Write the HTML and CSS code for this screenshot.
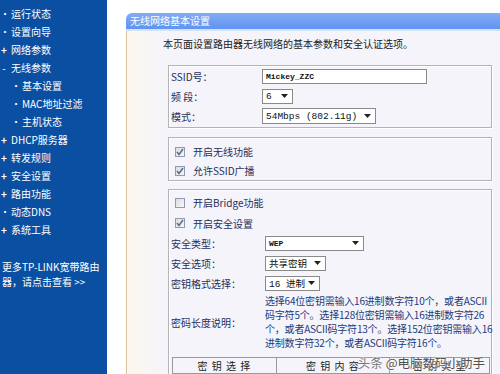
FILE: index.html
```html
<!DOCTYPE html>
<html lang="zh-CN">
<head>
  <meta charset="UTF-8" />
  <meta name="viewport" content="width=device-width, initial-scale=1.0"/>
  <title>无线网络基本设置</title>
  <link rel="stylesheet" href="styles.css">
</head>
<body>
<div class="page">

  <!-- 左侧菜单 -->
  <nav class="menu">
    <ul>
      <li><span class="mark">•</span>运行状态</li>
      <li><span class="mark">•</span>设置向导</li>
      <li><span class="mark plus">+</span>网络参数</li>
      <li><span class="mark">-</span>无线参数</li>
      <li class="sub"><span class="mark">•</span>基本设置</li>
      <li class="sub"><span class="mark">•</span>MAC地址过滤</li>
      <li class="sub"><span class="mark">•</span>主机状态</li>
      <li><span class="mark plus">+</span>DHCP服务器</li>
      <li><span class="mark plus">+</span>转发规则</li>
      <li><span class="mark plus">+</span>安全设置</li>
      <li><span class="mark plus">+</span>路由功能</li>
      <li><span class="mark">•</span>动态DNS</li>
      <li><span class="mark plus">+</span>系统工具</li>
    </ul>
    <p class="more">更多TP-LINK宽带路由<br>器，请点击查看 &gt;&gt;</p>
  </nav>

  <!-- 内容区 -->
  <main class="main">
    <section class="panel">
      <h2 class="panel-title">无线网络基本设置</h2>
      <div class="panel-body">
        <p class="intro">本页面设置路由器无线网络的基本参数和安全认证选项。</p>

        <div class="group basic">
          <div class="row">
            <span class="label">SSID号：</span>
            <input class="text" type="text" value="Mickey_ZZC">
          </div>
          <div class="row">
            <span class="label">频 段：</span>
            <span class="select w-channel">6<svg class="arrow" width="7" height="4" viewBox="0 0 7 4"><path d="M0 0h7L3.5 4z"/></svg></span>
          </div>
          <div class="row">
            <span class="label">模式：</span>
            <span class="select w-mode">54Mbps (802.11g)<svg class="arrow" width="7" height="4" viewBox="0 0 7 4"><path d="M0 0h7L3.5 4z"/></svg></span>
          </div>
        </div>

        <div class="group switches">
          <div class="check-row">
            <span class="box on"><svg width="8" height="8" viewBox="0 0 8 8"><path d="M1 4l2 2.5L7 1"/></svg></span>开启无线功能
          </div>
          <div class="check-row">
            <span class="box on"><svg width="8" height="8" viewBox="0 0 8 8"><path d="M1 4l2 2.5L7 1"/></svg></span>允许SSID广播
          </div>
        </div>

        <div class="group security">
          <div class="check-row first">
            <span class="box"></span>开启Bridge功能
          </div>
          <div class="check-row">
            <span class="box on"><svg width="8" height="8" viewBox="0 0 8 8"><path d="M1 4l2 2.5L7 1"/></svg></span>开启安全设置
          </div>
          <div class="row">
            <span class="label">安全类型：</span>
            <span class="select w-type"><b>WEP</b><svg class="arrow" width="7" height="4" viewBox="0 0 7 4"><path d="M0 0h7L3.5 4z"/></svg></span>
          </div>
          <div class="row">
            <span class="label">安全选项：</span>
            <span class="select w-option">共享密钥<svg class="arrow" width="7" height="4" viewBox="0 0 7 4"><path d="M0 0h7L3.5 4z"/></svg></span>
          </div>
          <div class="row">
            <span class="label">密钥格式选择：</span>
            <span class="select w-format">16 进制<svg class="arrow" width="7" height="4" viewBox="0 0 7 4"><path d="M0 0h7L3.5 4z"/></svg></span>
          </div>
          <div class="row desc">
            <span class="label">密码长度说明：</span>
            <p class="note">选择64位密钥需输入16进制数字符10个，或者ASCII<br>码字符5个。选择128位密钥需输入16进制数字符26<br>个，或者ASCII码字符13个。选择152位密钥需输入16<br>进制数字符32个，或者ASCII码字符16个。</p>
          </div>

          <table class="keys">
            <tr>
              <th class="c1">密 钥 选 择</th>
              <th class="c2">密 钥 内 容</th>
              <th class="c3">密 钥 类 型</th>
            </tr>
            <tr>
              <td></td>
              <td><span class="key-input"></span></td>
              <td><span class="key-input short"></span></td>
            </tr>
          </table>
        </div>
      </div>
    </section>
  </main>

  <div class="watermark"><span class="light">头条</span> @电脑数码小助手</div>
</div>
</body>
</html>
```

FILE: styles.css
```css
* {
  box-sizing: border-box;
}

html, body {
  margin: 0;
  height: 100%;
}

body {
  font-family: "Noto Sans CJK SC", sans-serif;
  font-size: 10px;
  background: #fff;
  overflow: hidden;
}

.page {
  position: relative;
  display: flex;
  height: 374px;
}

/* 左侧菜单 */
.menu {
  flex: none;
  width: 107px;
  background: #0b4fa3;
  color: #fff;
  padding-top: 5px;
}

.menu ul {
  list-style: none;
  margin: 0;
  padding: 0;
}

.menu li {
  display: flex;
  height: 18px;
  line-height: 18px;
  white-space: nowrap;
}

.menu .mark {
  flex: none;
  width: 11px;
  padding-right: 3px;
  text-align: center;
}

.menu .plus {
  font-weight: bold;
}

.menu .sub {
  padding-left: 11px;
}

.more {
  margin: 20px 0 0 2px;
  line-height: 15px;
  white-space: nowrap;
}

/* 内容区 */
.main {
  flex: 1;
  min-width: 0;
  padding: 13px 0 0 19px;
}

.panel {
  display: flex;
  flex-direction: column;
  height: 100%;
}

.panel-title {
  margin: 0;
  height: 18px;
  line-height: 16px;
  padding-left: 4px;
  font-size: 10px;
  font-weight: normal;
  color: #fff;
  background: linear-gradient(#84acf6, #6094ef);
  border-bottom: 2px solid #d4e3fb;
  border-top-left-radius: 6px;
}

.panel-body {
  flex: 1;
  border-left: 1px solid #d6c2a0;
  background: linear-gradient(to right, #fdf7ee, #f4f4fa 40px);
  padding: 5px 8px 0 36px;
}

.intro {
  margin: 0;
  line-height: 16px;
  color: #222;
}

.group {
  margin: 13px 0 0 5px;
  border: 1px solid #b4b4b4;
  box-shadow: inset 1px 1px 0 #fff, 1px 1px 0 #fff;
  color: #1f2f5c;
}

.row {
  display: grid;
  grid-template-columns: 94px 1fr;
  align-items: center;
  height: 20px;
  padding-left: 2px;
}

.basic {
  padding-bottom: 1px;
}

.basic .row {
  grid-template-columns: 91px 1fr;
}

.switches {
  margin-top: 9px;
  padding-top: 4px;
}

.security {
  margin-top: 8px;
  padding-top: 2px;
}

.check-row {
  display: flex;
  align-items: center;
  gap: 8px;
  height: 19px;
  padding-left: 6px;
}

.security .check-row {
  height: 20px;
}

.security .check-row.first {
  height: 21px;
}

.box {
  flex: none;
  display: flex;
  align-items: center;
  justify-content: center;
  width: 10px;
  height: 10px;
  border: 1px solid #8e9bb0;
  background: linear-gradient(135deg, #dcdcdc, #f7f7f7);
}

.box svg path {
  fill: none;
  stroke: #5d6f8e;
  stroke-width: 1.6;
}

/* 输入框和下拉框 */
.text {
  width: 165px;
  height: 15px;
  padding: 0 3px;
  border: 1px solid #8a8a8a;
  background: #fff;
  font: bold 8px "Liberation Mono", monospace;
  color: #111;
  outline: none;
}

.select {
  display: inline-flex;
  align-items: center;
  height: 15px;
  padding: 0 4px 0 3px;
  border: 1px solid #8a8a8a;
  background: #fff;
  color: #111;
  font: 9.5px "Liberation Mono", "Noto Sans CJK SC", monospace;
  white-space: nowrap;
}

.select b {
  font-size: 8px;
}

.select .arrow {
  margin-left: auto;
  fill: #222;
}

.w-channel { width: 31px; }
.w-mode { width: 114px; height: 16px; }
.w-type { width: 99px; }
.w-option { width: 61px; }
.w-format { width: 55px; }

.desc {
  height: 56px;
  margin-top: 1px;
}

.note {
  margin: 0;
  line-height: 14px;
  color: #1d3a7a;
  white-space: nowrap;
  letter-spacing: -0.2px;
}

/* 密钥表 */
.keys {
  margin: 7px 0 0 3px;
  width: 318px;
  border-collapse: collapse;
  color: #222;
}

.keys th,
.keys td {
  border: 1px solid #9a9a9a;
  height: 15px;
  padding: 0;
  font-weight: normal;
  text-align: center;
  font-size: 10px;
}

.keys th {
  letter-spacing: 1px;
}

.keys .c1 { width: 104px; }
.keys .c2 { width: 114px; }
.keys .c3 { width: 100px; }

.key-input {
  display: inline-block;
  width: 50px;
  height: 12px;
  border: 1px solid #aaa;
  background: #e4e4e4;
}

.key-input.short {
  width: 30px;
}

/* 水印 */
.watermark {
  position: absolute;
  right: 15px;
  bottom: 3px;
  line-height: 16px;
  font-size: 12.5px;
  color: #505050;
  text-shadow: 0 0 2px #fff, 0 0 2px #fff;
}

.watermark .light {
  color: #777;
}
```
